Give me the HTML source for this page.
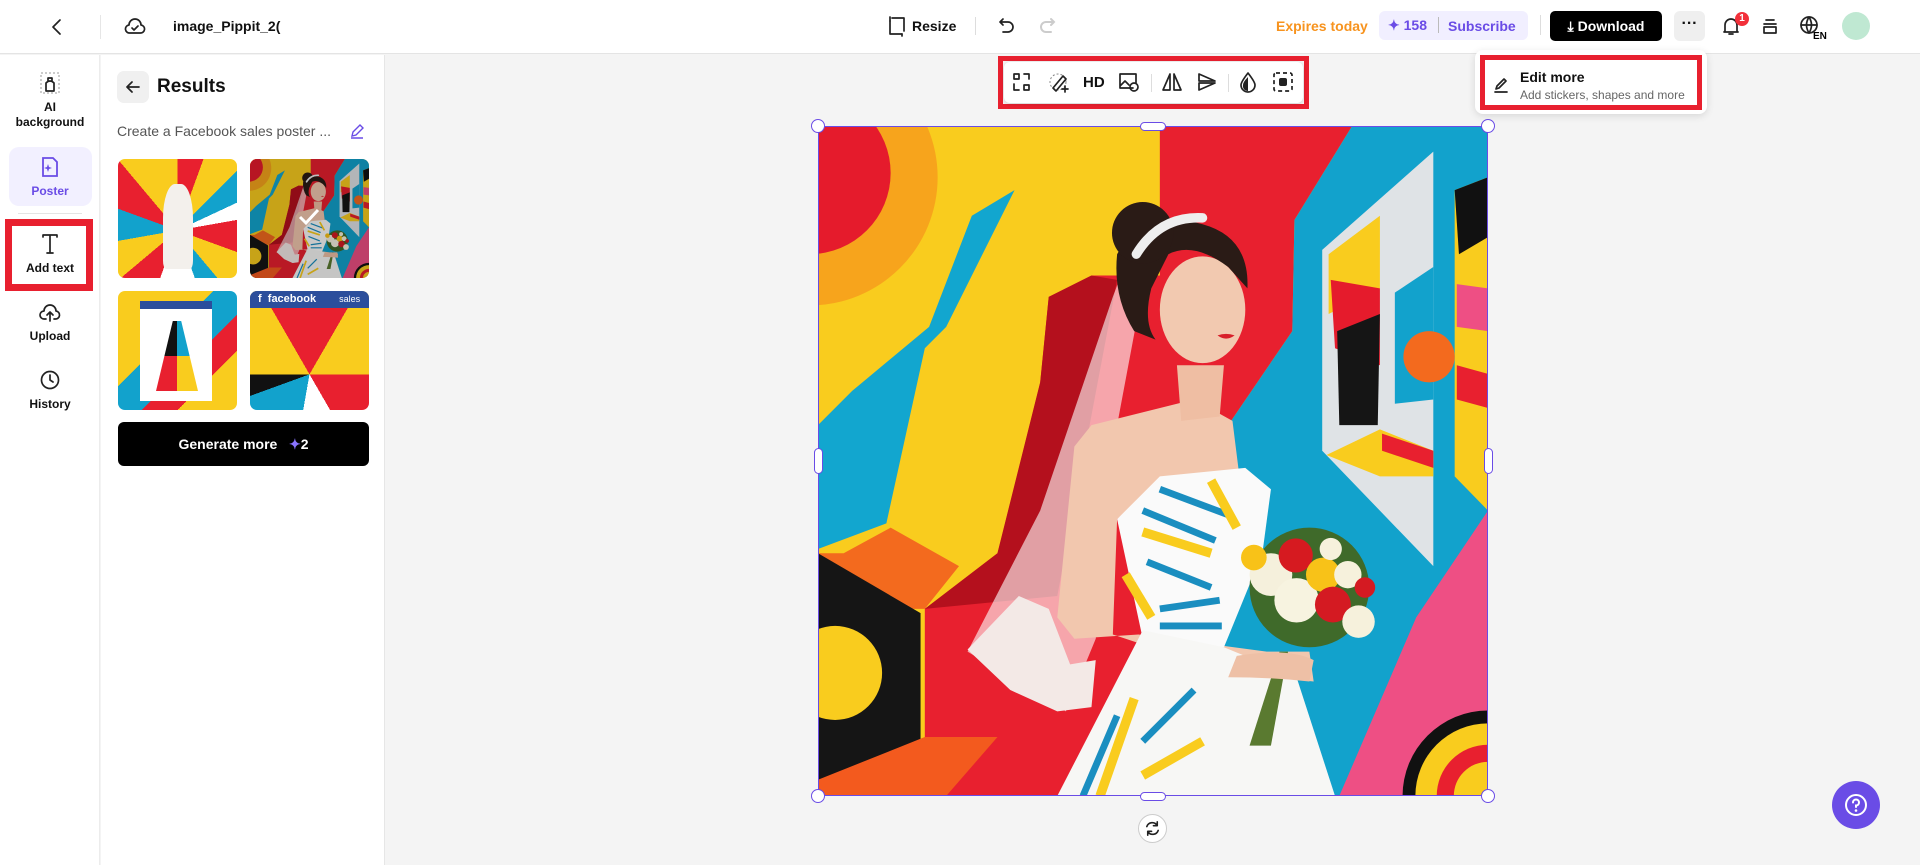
<!DOCTYPE html>
<html><head><meta charset="utf-8">
<style>
*{box-sizing:border-box;margin:0;padding:0}
body{width:1920px;height:865px;overflow:hidden;background:#f4f4f4;font-family:"Liberation Sans",Arial,sans-serif;color:#111;position:relative}
.a{position:absolute}
.top{left:0;top:0;width:1920px;height:54px;background:#fff;border-bottom:1px solid #e4e4e4}
.side{left:0;top:55px;width:100px;height:810px;background:#fff;border-right:1px solid #ececec}
.panel{left:101px;top:55px;width:284px;height:810px;background:#fff;border-right:1px solid #e6e6e6}
.lbl{font-size:12px;font-weight:bold;text-align:center;width:100px;left:0;line-height:15px}
svg{display:block}
.thumb{border-radius:7px;overflow:hidden;width:119px;height:119px}
.tb{stroke:#222;fill:none;stroke-width:1.7;stroke-linecap:round;stroke-linejoin:round}
</style></head><body>
<svg width="0" height="0" style="position:absolute">
<defs>
<symbol id="pic" viewBox="0 0 1568 1568" preserveAspectRatio="none">
<rect width="1568" height="1568" fill="#f9cc1e"/>
<circle cx="-20" cy="120" r="300" fill="#f7a41c"/>
<circle cx="-20" cy="110" r="190" fill="#e51b2c"/>
<path d="M0 700 L0 990 L160 930 L250 520 L300 470 L460 150 L360 210 L260 470 L80 620 Z" fill="#12a6cf"/>
<path d="M800 0 L1250 0 L1115 220 L1110 480 L960 700 L900 1568 L250 1568 L250 1130 L420 1000 L520 600 L540 400 L640 350 L800 350 Z" fill="#e8202f"/>
<path d="M520 600 L540 400 L640 350 L700 360 L560 1100 L250 1130 L420 1000 Z" fill="#b4101d"/>
<path d="M1250 0 L1568 0 L1568 1568 L900 1568 L960 700 L1110 480 L1115 220 Z" fill="#12a2cc"/>
<path d="M1568 900 L1568 1568 L1220 1568 L1400 1150 Z" fill="#ee4f84"/>
<path d="M1490 150 L1568 120 L1568 900 L1490 820 Z" fill="#f9cc1e"/>
<path d="M1490 150 L1568 120 L1568 260 L1500 300 Z" fill="#111"/>
<path d="M1495 370 L1568 380 L1568 480 L1495 470 Z" fill="#ee4f84"/>
<path d="M1495 560 L1568 580 L1568 660 L1495 640 Z" fill="#e8202f"/>
<circle cx="1568" cy="1568" r="200" fill="#111"/><circle cx="1568" cy="1568" r="170" fill="#f9cc1e"/><circle cx="1568" cy="1568" r="120" fill="#e8202f"/><circle cx="1568" cy="1568" r="80" fill="#f9cc1e"/>
<path d="M0 1000 L60 1000 L170 940 L330 1030 L250 1130 L0 1130 Z" fill="#f36a1e"/>
<path d="M0 1000 L240 1140 L240 1568 L0 1568 Z" fill="#151515"/>
<circle cx="40" cy="1280" r="110" fill="#f9cc1e"/>
<path d="M0 1568 L0 1530 L250 1430 L420 1430 L300 1568 Z" fill="#f35a1e"/>
<path d="M1180 290 L1440 60 L1440 1030 L1180 760 Z" fill="#dfe3e6"/>
<path d="M1195 300 L1315 210 L1315 380 L1195 440 Z" fill="#f9cc1e"/>
<path d="M1200 360 L1315 380 L1315 560 L1210 520 Z" fill="#e51b2c"/>
<path d="M1215 480 L1315 440 L1310 700 L1220 700 Z" fill="#151515"/>
<path d="M1350 390 L1440 330 L1440 640 L1350 650 Z" fill="#12a2cc"/>
<circle cx="1430" cy="540" r="60" fill="#f36a1e"/>
<path d="M1190 770 L1315 710 L1440 760 L1440 820 L1315 820 Z" fill="#f9cc1e"/>
<path d="M1320 720 L1440 760 L1440 800 L1320 760 Z" fill="#e8202f"/>
<path d="M720 320 L690 400 L520 900 L350 1230 L580 1370 L650 1200 L700 700 L760 380 Z" fill="#fff" opacity=".6"/>
<path d="M350 1225 L470 1100 L540 1130 L590 1260 L650 1250 L640 1360 L560 1370 L450 1320 Z" fill="#f3e9e6"/>
<path d="M640 700 L880 640 L970 690 L985 810 L800 830 L700 920 L690 1190 L960 1280 L1160 1300 L1150 1230 L1050 1230 L750 1190 L600 1200 L560 1150 L600 750 Z" fill="#f2c7ae"/>
<path d="M840 560 L950 560 L940 680 L850 690 Z" fill="#efbea3"/>
<path d="M700 920 L800 820 L1000 800 L1060 850 L1040 1000 L950 1220 L760 1200 Z" fill="#fafafa"/>
<path d="M760 1180 L560 1568 L1210 1568 L1120 1290 L950 1220 Z" fill="#f7f7f5"/>
<g stroke="#1a8ec0" stroke-width="16" fill="none"><path d="M800 850 L960 910"/><path d="M760 900 L930 970"/><path d="M770 1020 L920 1080"/><path d="M800 1130 L940 1110"/><path d="M800 1170 L945 1170"/><path d="M880 1320 L760 1440"/><path d="M700 1380 L620 1568"/></g>
<g stroke="#f9cc1e" stroke-width="22" fill="none"><path d="M760 950 L920 1000"/><path d="M920 830 L980 940"/><path d="M900 1440 L760 1520"/><path d="M740 1340 L660 1568"/><path d="M720 1050 L780 1150"/></g>
<ellipse cx="900" cy="430" rx="100" ry="125" fill="#f2c9b0"/>
<path d="M700 300 Q760 190 900 230 Q1010 260 1005 380 L960 330 Q880 270 820 300 L780 380 Q760 460 790 500 L740 480 Q690 400 700 300 Z" fill="#2a1b16"/>
<circle cx="760" cy="250" r="72" fill="#2a1b16"/>
<path d="M745 300 Q800 210 900 215" stroke="#eee" stroke-width="22" fill="none" stroke-linecap="round"/>
<path d="M935 490 Q955 483 975 490 Q955 505 935 490 Z" fill="#d8202a"/>
<path d="M1010 1450 L1080 1230 L1100 1230 L1060 1450 Z" fill="#5a7a30"/>
<circle cx="1150" cy="1080" r="140" fill="#3f6a2a"/>
<circle cx="1060" cy="1050" r="50" fill="#f5f0dc"/><circle cx="1120" cy="1110" r="52" fill="#f7f3e0"/><circle cx="1118" cy="1005" r="40" fill="#d61a20"/><circle cx="1182" cy="1050" r="40" fill="#f8c218"/><circle cx="1205" cy="1120" r="42" fill="#d41a22"/><circle cx="1265" cy="1160" r="38" fill="#f6f1dc"/><circle cx="1020" cy="1010" r="30" fill="#f8c218"/><circle cx="1240" cy="1050" r="32" fill="#f6f1dc"/><circle cx="1280" cy="1080" r="24" fill="#d41a22"/><circle cx="1200" cy="990" r="26" fill="#f6f1dc"/>
<path d="M980 1240 Q1100 1220 1160 1250 L1150 1300 Q1060 1290 960 1290 Z" fill="#eec0a6"/>
</symbol>
</defs></svg>

<!-- top bar -->
<div class="a top"></div>
<svg class="a" style="left:47px;top:17px" width="20" height="20" viewBox="0 0 20 20"><path d="M13 3 L6 10 L13 17" class="tb" stroke-width="2"/></svg>
<div class="a" style="left:100px;top:15px;width:1px;height:24px;background:#e6e6e6"></div>
<svg class="a" style="left:123px;top:14px" width="24" height="24" viewBox="0 0 24 24"><path class="tb" d="M7 19 H17 A4 4 0 0 0 18 11 A6 6 0 0 0 6 11 A4 4 0 0 0 7 19 Z"/><path class="tb" d="M9 14 L11 16 L15 12"/></svg>
<div class="a" style="left:173px;top:18px;font-size:14px;font-weight:bold">image_Pippit_2(</div>
<svg class="a" style="left:886px;top:15px" width="22" height="22" viewBox="0 0 22 22"><path class="tb" d="M4 6 V19 H16 M18 16 V3 H6"/><path class="tb" d="M4 2 V6 M16 19 V21"/></svg>
<div class="a" style="left:912px;top:18px;font-size:14px;font-weight:bold">Resize</div>
<div class="a" style="left:975px;top:17px;width:1px;height:18px;background:#ddd"></div>
<svg class="a" style="left:996px;top:15px" width="22" height="22" viewBox="0 0 22 22"><path class="tb" d="M7 4 L4 7 L7 10 M4 7 H12 A5 5 0 0 1 12 17 H7" stroke-width="2"/></svg>
<svg class="a" style="left:1036px;top:15px" width="22" height="22" viewBox="0 0 22 22"><path d="M15 4 L18 7 L15 10 M18 7 H10 A5 5 0 0 0 10 17 H15" stroke="#ccc" stroke-width="2" fill="none" stroke-linecap="round"/></svg>
<div class="a" style="left:1276px;top:18px;font-size:14px;font-weight:bold;color:#f7931e">Expires today</div>
<div class="a" style="left:1379px;top:11px;width:149px;height:29px;background:#f1efff;border-radius:6px"></div>
<div class="a" style="left:1388px;top:17px;font-size:14px;font-weight:bold;color:#6a4ce6">✦ 158</div>
<div class="a" style="left:1438px;top:17px;width:1px;height:16px;background:#bbb"></div>
<div class="a" style="left:1448px;top:18px;font-size:14px;font-weight:bold;color:#6a4ce6">Subscribe</div>
<div class="a" style="left:1540px;top:15px;width:1px;height:20px;background:#ddd"></div>
<div class="a" style="left:1550px;top:11px;width:112px;height:30px;background:#000;border-radius:5px;color:#fff;font-size:14px;font-weight:bold;line-height:30px;text-align:center">⤓ Download</div>
<div class="a" style="left:1674px;top:11px;width:31px;height:30px;background:#efefef;border-radius:6px;font-size:16px;font-weight:bold;text-align:center;line-height:26px">···</div>
<svg class="a" style="left:1719px;top:14px" width="24" height="24" viewBox="0 0 24 24"><path class="tb" d="M6 17 V11 A6 6 0 0 1 18 11 V17 L19 18 H5 Z M10 20 H14"/></svg>
<div class="a" style="left:1735px;top:12px;width:14px;height:14px;border-radius:7px;background:#f2303a;color:#fff;font-size:10px;font-weight:bold;text-align:center;line-height:14px">1</div>
<svg class="a" style="left:1759px;top:15px" width="22" height="22" viewBox="0 0 22 22"><path class="tb" d="M7 5 H15 M5 9 H17 M5 12 H17 V18 H5 Z"/></svg>
<svg class="a" style="left:1798px;top:14px" width="30" height="26" viewBox="0 0 30 26"><circle cx="11" cy="11" r="8" class="tb"/><path class="tb" d="M3 11 H19 M11 3 Q6 11 11 19 M11 3 Q16 11 11 19"/><text x="15" y="25" font-size="10" font-weight="bold" font-family="Liberation Sans">EN</text></svg>
<div class="a" style="left:1842px;top:12px;width:28px;height:28px;border-radius:14px;background:#bfe8d2"></div>

<!-- side -->
<div class="a side"></div>
<svg class="a" style="left:39px;top:71px" width="22" height="24" viewBox="0 0 22 24"><rect x="2" y="2" width="18" height="20" fill="none" stroke="#999" stroke-dasharray="2 2"/><path class="tb" d="M7 20 V12 Q11 8 15 12 V20 Z M9 10 V7 H13 V10"/></svg>
<div class="a lbl" style="top:100px">AI<br>background</div>
<div class="a" style="left:9px;top:147px;width:83px;height:59px;background:#f2f0ff;border-radius:10px"></div>
<svg class="a" style="left:39px;top:156px" width="22" height="22" viewBox="0 0 22 22"><path d="M4 2 H14 L18 6 V20 H4 Z" fill="none" stroke="#6a4ce6" stroke-width="1.8"/><path d="M9 8 L10 11 L13 12 L10 13 L9 16 L8 13 L5 12 L8 11 Z" fill="#6a4ce6"/></svg>
<div class="a lbl" style="top:184px;color:#6a4ce6">Poster</div>
<div class="a" style="left:18px;top:213px;width:64px;height:1px;background:#e4e4e4"></div>
<div class="a" style="left:5px;top:219px;width:88px;height:72px;border:7px solid #e8202f"></div>
<svg class="a" style="left:38px;top:232px" width="24" height="24" viewBox="0 0 24 24"><path class="tb" d="M5 5 V3 H19 V5 M12 3 V21 M9 21 H15"/></svg>
<div class="a lbl" style="top:261px">Add text</div>
<svg class="a" style="left:38px;top:300px" width="24" height="24" viewBox="0 0 24 24"><path class="tb" d="M8 19 H6 A4 4 0 0 1 6 11 A6 6 0 0 1 18 11 A4 4 0 0 1 17 19 H16 M12 21 V12 M9 15 L12 12 L15 15"/></svg>
<div class="a lbl" style="top:329px">Upload</div>
<svg class="a" style="left:38px;top:368px" width="24" height="24" viewBox="0 0 24 24"><circle cx="12" cy="12" r="8.5" class="tb" stroke-width="2"/><path class="tb" d="M12 7 V12 L15 14" stroke-width="2"/></svg>
<div class="a lbl" style="top:397px">History</div>

<!-- panel -->
<div class="a panel"></div>
<div class="a" style="left:117px;top:71px;width:32px;height:32px;background:#f0f0f0;border-radius:7px"></div>
<svg class="a" style="left:123px;top:77px" width="20" height="20" viewBox="0 0 20 20"><path class="tb" d="M16 10 H4 M9 5 L4 10 L9 15" stroke-width="2"/></svg>
<div class="a" style="left:157px;top:76px;font-size:19px;font-weight:bold">Results</div>
<div class="a" style="left:117px;top:123px;font-size:14px;color:#555">Create a Facebook sales poster ...</div>
<svg class="a" style="left:349px;top:123px" width="16" height="16" viewBox="0 0 16 16"><path d="M3 13 L4 9 L11 2 L14 5 L7 12 Z M2 15 H14" fill="none" stroke="#6a4ce6" stroke-width="1.4"/></svg>
<div class="a thumb" style="left:118px;top:159px;background:conic-gradient(from 0deg at 50% 60%,#e8202f 0 20deg,#f9cc1e 20deg 45deg,#12a2cc 45deg 65deg,#fff 65deg 80deg,#e8202f 80deg 110deg,#f9cc1e 110deg 140deg,#12a2cc 140deg 160deg,#fff 160deg 200deg,#e8202f 200deg 230deg,#f9cc1e 230deg 260deg,#12a2cc 260deg 290deg,#e8202f 290deg 320deg,#f9cc1e 320deg 360deg)">
<div style="position:absolute;left:45px;top:25px;width:30px;height:85px;background:#f3f0ec;border-radius:40% 40% 10% 10%"></div></div>
<div class="a thumb" style="left:250px;top:159px"><svg width="119" height="119"><use href="#pic" x="0" y="0" width="119" height="119"/></svg>
<div style="position:absolute;left:0;top:0;width:119px;height:119px;background:rgba(0,0,0,.2)"></div>
<svg style="position:absolute;left:47px;top:48px" width="24" height="20" viewBox="0 0 24 20"><path d="M3 10 L9 16 L21 3" stroke="#fff" stroke-width="3" fill="none"/></svg></div>
<div class="a thumb" style="left:118px;top:291px;background:linear-gradient(135deg,#f9cc1e 0 40%,#12a2cc 40% 60%,#e8202f 60% 75%,#f9cc1e 75%)">
<div style="position:absolute;left:22px;top:10px;width:72px;height:100px;background:#fff"></div>
<div style="position:absolute;left:22px;top:10px;width:72px;height:8px;background:#2b4e9c"></div>
<div style="position:absolute;left:38px;top:30px;width:42px;height:70px;background:conic-gradient(#12a2cc 0 25%,#f9cc1e 0 50%,#e8202f 0 75%,#111 0);clip-path:polygon(40% 0,60% 0,100% 100%,0 100%)"></div></div>
<div class="a thumb" style="left:250px;top:291px;background:conic-gradient(from 30deg at 50% 70%,#f9cc1e 0 60deg,#e8202f 60deg 120deg,#fff 120deg 160deg,#12a2cc 160deg 220deg,#111 220deg 240deg,#f9cc1e 240deg 300deg,#e8202f 300deg 360deg)">
<div style="position:absolute;left:0;top:0;width:119px;height:17px;background:#2b4e9c;color:#fff;font-size:11px;font-weight:bold;line-height:17px;padding-left:8px">f &nbsp;facebook <span style="font-weight:normal;font-size:9px;margin-left:20px">sales</span></div></div>
<div class="a" style="left:118px;top:422px;width:251px;height:44px;background:#000;border-radius:6px;color:#fff;font-size:14px;font-weight:bold;line-height:44px;text-align:center">Generate more &nbsp;&nbsp;<span style="color:#8a74ff">✦</span>2</div>

<!-- canvas -->
<svg class="a" style="left:818px;top:126px" width="670" height="670"><use href="#pic" width="670" height="670"/></svg>
<div class="a" style="left:818px;top:126px;width:670px;height:670px;border:1.5px solid #6a4ce6"></div>
<div class="a" style="left:811px;top:119px;width:14px;height:14px;border-radius:7px;background:#fff;border:1.5px solid #6a4ce6"></div>
<div class="a" style="left:1481px;top:119px;width:14px;height:14px;border-radius:7px;background:#fff;border:1.5px solid #6a4ce6"></div>
<div class="a" style="left:811px;top:789px;width:14px;height:14px;border-radius:7px;background:#fff;border:1.5px solid #6a4ce6"></div>
<div class="a" style="left:1481px;top:789px;width:14px;height:14px;border-radius:7px;background:#fff;border:1.5px solid #6a4ce6"></div>
<div class="a" style="left:1140px;top:122px;width:26px;height:9px;border-radius:5px;background:#fff;border:1.5px solid #6a4ce6"></div>
<div class="a" style="left:1140px;top:792px;width:26px;height:9px;border-radius:5px;background:#fff;border:1.5px solid #6a4ce6"></div>
<div class="a" style="left:814px;top:448px;width:9px;height:26px;border-radius:5px;background:#fff;border:1.5px solid #6a4ce6"></div>
<div class="a" style="left:1484px;top:448px;width:9px;height:26px;border-radius:5px;background:#fff;border:1.5px solid #6a4ce6"></div>
<div class="a" style="left:1138px;top:814px;width:29px;height:29px;border-radius:15px;background:#fff;border:1px solid #ccc"></div>
<svg class="a" style="left:1143px;top:819px" width="19" height="19" viewBox="0 0 20 20"><path class="tb" d="M15 7 A6 6 0 0 0 4 8 M5 13 A6 6 0 0 0 16 12 M15 3 V7 H11 M5 17 V13 H9"/></svg>

<!-- toolbar -->
<div class="a" style="left:998px;top:56px;width:311px;height:53px;border:5px solid #e8202f"></div>
<div class="a" style="left:1004px;top:62px;width:299px;height:41px;background:#fff;border-radius:6px;box-shadow:0 1px 4px rgba(0,0,0,.15)"></div>
<svg class="a" style="left:1010px;top:71px" width="24" height="22" viewBox="0 0 24 22"><path class="tb" d="M4 3 H9 V8 H4 Z M14 14 H19 V19 H14 Z M4 13 V19 H9 M19 8 V3 H14"/></svg>
<svg class="a" style="left:1047px;top:71px" width="24" height="22" viewBox="0 0 24 22"><circle cx="11" cy="11" r="8" fill="none" stroke="#888" stroke-dasharray="2 2"/><path class="tb" d="M6 17 L16 5 L19 8 L9 20 Z M18 15 V21 M15 18 H21"/></svg>
<div class="a" style="left:1083px;top:74px;font-size:15px;font-weight:bold">HD</div>
<svg class="a" style="left:1117px;top:71px" width="24" height="22" viewBox="0 0 24 22"><path class="tb" d="M16 17 H3 V3 H19 V12 M3 15 L8 10 L12 14"/><circle cx="17" cy="16" r="4" class="tb"/></svg>
<div class="a" style="left:1151px;top:74px;width:1px;height:18px;background:#ddd"></div>
<svg class="a" style="left:1160px;top:71px" width="24" height="22" viewBox="0 0 24 22"><path class="tb" d="M10 3 L3 19 H10 Z M14 3 L21 19 H14 Z"/></svg>
<svg class="a" style="left:1195px;top:71px" width="24" height="22" viewBox="0 0 24 22"><path class="tb" d="M4 3 L20 10 H4 Z M4 12 H20 L4 19 Z"/></svg>
<div class="a" style="left:1228px;top:74px;width:1px;height:18px;background:#ddd"></div>
<svg class="a" style="left:1236px;top:71px" width="24" height="22" viewBox="0 0 24 22"><path class="tb" d="M12 2 Q5 11 5 14 A7 7 0 0 0 19 14 Q19 11 12 2 Z"/><path d="M12 6 V20 A5 5 0 0 1 7 14 Q7 11 12 6 Z" fill="#222"/></svg>
<svg class="a" style="left:1271px;top:71px" width="24" height="22" viewBox="0 0 24 22"><rect x="3" y="2" width="18" height="18" rx="2" fill="none" stroke="#222" stroke-width="1.7" stroke-dasharray="4 3"/><rect x="8" y="7" width="8" height="8" rx="2" fill="#222"/></svg>

<!-- edit more -->
<div class="a" style="left:1475px;top:50px;width:232px;height:64px;background:#fff;border-radius:8px;box-shadow:0 2px 8px rgba(0,0,0,.12)"></div>
<div class="a" style="left:1480px;top:55px;width:222px;height:55px;border:5px solid #e8202f"></div>
<svg class="a" style="left:1493px;top:77px" width="16" height="16" viewBox="0 0 16 16"><path class="tb" d="M3 12 L4 9 L11 2 L13 4 L6 11 Z M2 15 H14" stroke-width="1.4"/></svg>
<div class="a" style="left:1520px;top:69px;font-size:14px;font-weight:bold">Edit more</div>
<div class="a" style="left:1520px;top:88px;font-size:12px;color:#666">Add stickers, shapes and more</div>

<!-- help -->
<div class="a" style="left:1832px;top:781px;width:48px;height:48px;border-radius:24px;background:#6a4ce6"></div>
<svg class="a" style="left:1843px;top:792px" width="26" height="26" viewBox="0 0 26 26"><circle cx="13" cy="13" r="10" fill="none" stroke="#fff" stroke-width="2"/><path d="M10 10.5 A3 3 0 1 1 13 13.5 V15" fill="none" stroke="#fff" stroke-width="2" stroke-linecap="round"/><circle cx="13" cy="18.5" r="1.3" fill="#fff"/></svg>
</body></html>
